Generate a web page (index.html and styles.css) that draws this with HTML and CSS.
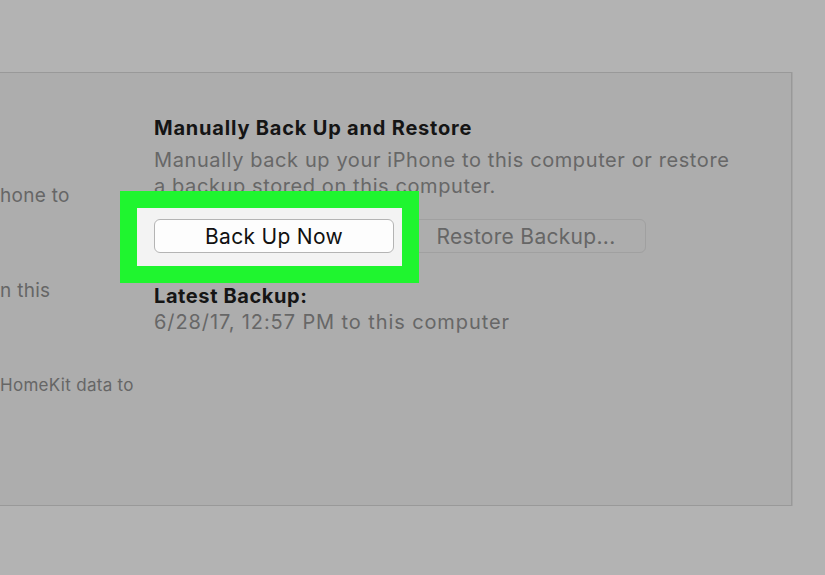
FILE: index.html
```html
<!DOCTYPE html>
<html>
<head>
<meta charset="utf-8">
<link rel="stylesheet" href="styles.css">
</head>
<body>
<div class="panel">
  <div class="left">
    <p class="lt l1">hone to</p>
    <p class="lt l2">n this</p>
    <p class="lt l3">HomeKit data to</p>
  </div>
  <div class="right">
    <h2 class="title">Manually Back Up and Restore</h2>
    <p class="desc">Manually back up your iPhone to this computer or restore<br>a backup stored on this computer.</p>
    <div class="buttons">
      <span class="highlight"><button class="btn primary">Back Up Now</button></span>
      <button class="btn secondary">Restore Backup...</button>
    </div>
    <h3 class="latest">Latest Backup:</h3>
    <p class="date">6/28/17, 12:57 PM to this computer</p>
  </div>
</div>
</body>
</html>
```
FILE: styles.css
```css
html, body {
  margin: 0;
  padding: 0;
  background: #b3b3b3;
  width: 825px;
  height: 575px;
  overflow: hidden;
  font-family: Inter, "Liberation Sans", sans-serif;
}
.panel {
  margin-top: 72px;
  width: 791px;
  height: 432px;
  background: #adadad;
  border-top: 1px solid #999;
  border-right: 1px solid #999;
  border-bottom: 1px solid #999;
  box-shadow: 1px 0 0 #a6a6a6;
  display: flex;
}
.left {
  width: 154px;
  flex: none;
  padding-top: 111px;
}
.lt {
  margin: 0;
  color: #666;
  font-size: 19px;
  line-height: 24px;
  letter-spacing: 0.3px;
  white-space: nowrap;
}
.l2 { margin-top: 71px; }
.l3 { margin-top: 70px; font-size: 17px; }
.right {
  flex: 1;
  padding-top: 43px;
}
.title {
  margin: 0;
  font-size: 20px;
  line-height: 24px;
  font-weight: 700;
  letter-spacing: 0.8px;
  color: #151515;
}
.desc {
  margin: 7px 0 0;
  font-size: 20px;
  line-height: 26px;
  letter-spacing: 0.6px;
  color: #676767;
}
.buttons {
  display: flex;
  align-items: flex-start;
  margin-top: 9px;
}
.highlight {
  position: relative;
  z-index: 1;
  margin-left: -17px;
  padding: 11px 8px 13px 17px;
  background: #f3f3f3;
  outline: 17px solid #1ff52f;
}
.btn {
  display: block;
  width: 240px;
  height: 34px;
  border-radius: 6px;
  font-family: inherit;
  font-size: 21px;
  letter-spacing: 0.3px;
  padding: 0;
}
.primary {
  background: #fdfdfd;
  border: 1px solid #b4b4b4;
  color: #111;
}
.secondary {
  margin: 11px 0 0 4px;
  background: #adadad;
  border: 1px solid #a0a0a0;
  color: #666;
}
.latest {
  margin: 18px 0 0;
  font-size: 20px;
  line-height: 24px;
  font-weight: 700;
  letter-spacing: 0.6px;
  color: #151515;
}
.date {
  margin: 2px 0 0;
  font-size: 20px;
  line-height: 24px;
  letter-spacing: 0.9px;
  color: #676767;
}
```
